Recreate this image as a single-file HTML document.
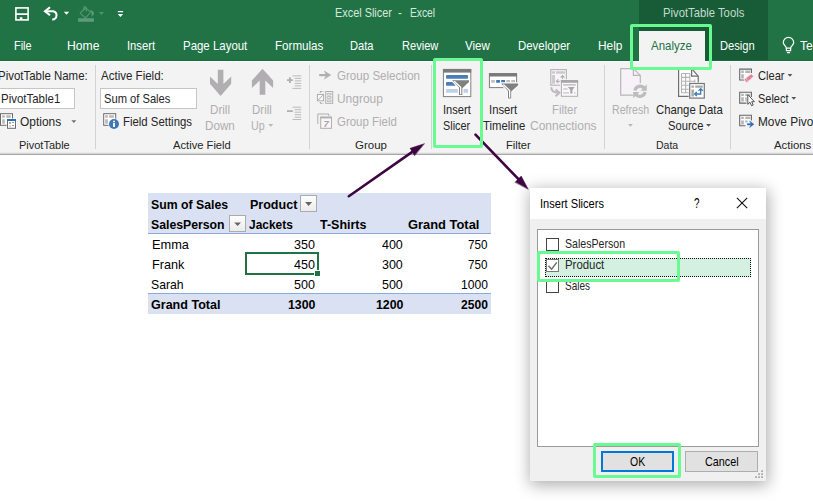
<!DOCTYPE html>
<html><head><meta charset="utf-8"><title>Excel Slicer</title>
<style>
*{box-sizing:border-box;margin:0;padding:0}
html,body{width:813px;height:501px;overflow:hidden;background:#fff}
body{font-family:"Liberation Sans",sans-serif;position:relative}
.a{position:absolute}
.t{position:absolute;white-space:pre;line-height:1;transform-origin:0 0;font-family:"Liberation Sans",sans-serif}
.sep{position:absolute;top:65px;width:1px;height:84px;background:#d4d2d4}
.hl{position:absolute;border:3px solid #69fa92;border-radius:2px}
svg{position:absolute;left:0;top:0;overflow:visible}
</style></head><body>
<!-- header -->
<div class="a" style="left:0;top:0;width:813px;height:61px;background:#217346"></div>
<div class="a" style="left:0;top:30px;width:52px;height:31px;background:#207345"></div>
<div class="a" style="left:639px;top:0;width:129px;height:61px;background:#185c37"></div>
<div class="a" style="left:639px;top:31px;width:66px;height:30px;background:#f3f3f3"></div>
<!-- ribbon -->
<div class="a" style="left:0;top:60px;width:639px;height:1px;background:#1a6a3c"></div>
<div class="a" style="left:705px;top:60px;width:108px;height:1px;background:#1a6a3c"></div>
<div class="a" style="left:0;top:61px;width:813px;height:93px;background:#f3f3f3"></div>
<div class="a" style="left:0;top:61px;width:639px;height:1px;background:#fcfcfc"></div>
<div class="a" style="left:705px;top:61px;width:108px;height:1px;background:#fcfcfc"></div>
<div class="a" style="left:0;top:152px;width:813px;height:1px;background:#ebebeb"></div>
<div class="a" style="left:0;top:153px;width:813px;height:1px;background:#d6d6d6"></div>
<div class="a" style="left:0;top:154px;width:813px;height:1px;background:#a6a6a6"></div>

<div class="sep" style="left:95px"></div>
<div class="sep" style="left:309px"></div>
<div class="sep" style="left:431px"></div>
<div class="sep" style="left:604px"></div>
<div class="sep" style="left:730px"></div>
<div class="a" style="left:-4px;top:88px;width:79px;height:21px;background:#fff;border:1px solid #c6c6c6"></div>
<div class="a" style="left:100px;top:88px;width:97px;height:21px;background:#fff;border:1px solid #c6c6c6"></div>

<!-- sheet -->
<div class="a" style="left:148px;top:193px;width:343px;height:41px;background:#d9e1f2"></div>
<div class="a" style="left:148px;top:233px;width:343px;height:1px;background:#8ea9db"></div>
<div class="a" style="left:148px;top:293px;width:343px;height:21px;background:#d9e1f2"></div>
<div class="a" style="left:148px;top:293px;width:343px;height:1px;background:#8ea9db"></div>
<div class="a" style="left:300px;top:195px;width:16.500px;height:16.500px;background:linear-gradient(#fefefe,#ebebeb);border:1px solid #ababab"></div>
<div class="a" style="left:229px;top:215px;width:16.500px;height:16.500px;background:linear-gradient(#fefefe,#ebebeb);border:1px solid #ababab"></div>
<div class="a" style="left:245px;top:252px;width:74px;height:23px;border:2px solid #217346"></div>
<div class="a" style="left:314px;top:270px;width:7px;height:7px;background:#217346;border:1px solid #fff"></div>

<!-- dialog -->
<div class="a" style="left:530px;top:188px;width:236px;height:292.500px;background:#f0f0f0;box-shadow:1px 3px 15px 1px rgba(0,0,0,.33)"></div>
<div class="a" style="left:530px;top:188px;width:236px;height:31px;background:#fff"></div>
<div class="a" style="left:537px;top:229px;width:222px;height:218px;background:#fff;border:1px solid #9a9a9a"></div>
<div class="a" style="left:545px;top:258px;width:206px;height:19px;background:#d3f0e0;border:1px dotted #111"></div>
<div class="a" style="left:546px;top:238px;width:13px;height:13px;background:#fff;border:1px solid #444"></div>
<div class="a" style="left:546px;top:259px;width:13px;height:13px;background:#fff;border:1px solid #777"></div>
<div class="a" style="left:546px;top:280px;width:13px;height:13px;background:#fff;border:1px solid #444"></div>
<div class="a" style="left:601px;top:451px;width:73px;height:21px;background:#e1e1e1;border:2px solid #0078d7"></div>
<div class="a" style="left:685px;top:451px;width:73px;height:21px;background:#e1e1e1;border:1px solid #adadad"></div>

<span class="t" style="left:334.6px;top:7.00px;font-size:12.6px;color:#d6e8dd;transform:scaleX(0.8648)">Excel Slicer</span>
<span class="t" style="left:398.4px;top:7.00px;font-size:12.6px;color:#d6e8dd;transform:scaleX(0.9279)">-</span>
<span class="t" style="left:409.9px;top:7.00px;font-size:12.6px;color:#d6e8dd;transform:scaleX(0.8150)">Excel</span>
<span class="t" style="left:663.4px;top:7.00px;font-size:12.6px;color:#c3dbcc;transform:scaleX(0.8956)">PivotTable Tools</span>
<span class="t" style="left:13.6px;top:40.00px;font-size:12.9px;color:#ffffff;transform:scaleX(0.8469)">File</span>
<span class="t" style="left:66.6px;top:40.00px;font-size:12.9px;color:#ffffff;transform:scaleX(0.9421)">Home</span>
<span class="t" style="left:126.7px;top:40.00px;font-size:12.9px;color:#ffffff;transform:scaleX(0.8713)">Insert</span>
<span class="t" style="left:182.5px;top:40.00px;font-size:12.9px;color:#ffffff;transform:scaleX(0.8882)">Page Layout</span>
<span class="t" style="left:274.5px;top:40.00px;font-size:12.9px;color:#ffffff;transform:scaleX(0.8989)">Formulas</span>
<span class="t" style="left:350.4px;top:40.00px;font-size:12.9px;color:#ffffff;transform:scaleX(0.8629)">Data</span>
<span class="t" style="left:402.0px;top:40.00px;font-size:12.9px;color:#ffffff;transform:scaleX(0.8585)">Review</span>
<span class="t" style="left:464.9px;top:40.00px;font-size:12.9px;color:#ffffff;transform:scaleX(0.8983)">View</span>
<span class="t" style="left:517.9px;top:40.00px;font-size:12.9px;color:#ffffff;transform:scaleX(0.8866)">Developer</span>
<span class="t" style="left:597.6px;top:40.00px;font-size:12.9px;color:#ffffff;transform:scaleX(0.9202)">Help</span>
<span class="t" style="left:651.3px;top:40.00px;font-size:12.9px;color:#217346;transform:scaleX(0.8894)">Analyze</span>
<span class="t" style="left:719.7px;top:40.00px;font-size:12.9px;color:#ffffff;transform:scaleX(0.8670)">Design</span>
<span class="t" style="left:800.4px;top:40.00px;font-size:12.9px;color:#ffffff;transform:scaleX(0.9464)">Tel</span>
<span class="t" style="left:-1.6px;top:70.00px;font-size:12.8px;color:#262626;transform:scaleX(0.8943)">PivotTable Name:</span>
<span class="t" style="left:1.0px;top:93.00px;font-size:12.8px;color:#262626;transform:scaleX(0.8962)">PivotTable1</span>
<span class="t" style="left:19.7px;top:116.00px;font-size:12.8px;color:#262626;transform:scaleX(0.9340)">Options</span>
<span class="t" style="left:18.6px;top:140.00px;font-size:11.2px;color:#262626;transform:scaleX(0.9821)">PivotTable</span>
<span class="t" style="left:100.5px;top:70.00px;font-size:12.8px;color:#262626;transform:scaleX(0.9010)">Active Field:</span>
<span class="t" style="left:103.7px;top:93.00px;font-size:12.8px;color:#262626;transform:scaleX(0.8724)">Sum of Sales</span>
<span class="t" style="left:122.8px;top:116.00px;font-size:12.8px;color:#262626;transform:scaleX(0.8900)">Field Settings</span>
<span class="t" style="left:173.0px;top:140.00px;font-size:11.2px;color:#262626;transform:scaleX(0.9995)">Active Field</span>
<span class="t" style="left:209.7px;top:104.00px;font-size:12.8px;color:#b0aeb0;transform:scaleX(0.9072)">Drill</span>
<span class="t" style="left:204.9px;top:120.00px;font-size:12.8px;color:#b0aeb0;transform:scaleX(0.9108)">Down</span>
<span class="t" style="left:251.8px;top:104.00px;font-size:12.8px;color:#b0aeb0;transform:scaleX(0.8981)">Drill</span>
<span class="t" style="left:250.9px;top:120.00px;font-size:12.8px;color:#b0aeb0;transform:scaleX(0.8374)">Up</span>
<span class="t" style="left:336.6px;top:70.00px;font-size:12.8px;color:#b0aeb0;transform:scaleX(0.9045)">Group Selection</span>
<span class="t" style="left:337.1px;top:93.00px;font-size:12.8px;color:#b0aeb0;transform:scaleX(0.9329)">Ungroup</span>
<span class="t" style="left:336.6px;top:116.00px;font-size:12.8px;color:#b0aeb0;transform:scaleX(0.8959)">Group Field</span>
<span class="t" style="left:354.8px;top:140.00px;font-size:11.2px;color:#262626;transform:scaleX(1.0259)">Group</span>
<span class="t" style="left:443.2px;top:104.00px;font-size:12.8px;color:#262626;transform:scaleX(0.8683)">Insert</span>
<span class="t" style="left:443.4px;top:120.00px;font-size:12.8px;color:#262626;transform:scaleX(0.8469)">Slicer</span>
<span class="t" style="left:488.7px;top:104.00px;font-size:12.8px;color:#262626;transform:scaleX(0.8808)">Insert</span>
<span class="t" style="left:482.5px;top:120.00px;font-size:12.8px;color:#262626;transform:scaleX(0.8854)">Timeline</span>
<span class="t" style="left:551.8px;top:104.00px;font-size:12.8px;color:#b0aeb0;transform:scaleX(0.8862)">Filter</span>
<span class="t" style="left:530.4px;top:120.00px;font-size:12.8px;color:#b0aeb0;transform:scaleX(0.9362)">Connections</span>
<span class="t" style="left:506.0px;top:140.00px;font-size:11.2px;color:#262626;transform:scaleX(0.9970)">Filter</span>
<span class="t" style="left:611.8px;top:104.00px;font-size:12.8px;color:#b0aeb0;transform:scaleX(0.8301)">Refresh</span>
<span class="t" style="left:655.6px;top:104.00px;font-size:12.8px;color:#262626;transform:scaleX(0.8857)">Change Data</span>
<span class="t" style="left:667.6px;top:120.00px;font-size:12.8px;color:#262626;transform:scaleX(0.8731)">Source</span>
<span class="t" style="left:656.2px;top:140.00px;font-size:11.2px;color:#262626;transform:scaleX(0.9391)">Data</span>
<span class="t" style="left:757.5px;top:70.00px;font-size:12.8px;color:#262626;transform:scaleX(0.8662)">Clear</span>
<span class="t" style="left:757.5px;top:93.00px;font-size:12.8px;color:#262626;transform:scaleX(0.8573)">Select</span>
<span class="t" style="left:757.7px;top:116.00px;font-size:12.8px;color:#262626;transform:scaleX(0.9255)">Move Pivo</span>
<span class="t" style="left:774.4px;top:140.00px;font-size:11.2px;color:#262626;transform:scaleX(1.0140)">Actions</span>
<span class="t" style="left:151.3px;top:199.00px;font-size:12.9px;color:#000000;transform:scaleX(0.9524);font-weight:bold">Sum of Sales</span>
<span class="t" style="left:249.6px;top:199.00px;font-size:12.9px;color:#000000;transform:scaleX(0.9712);font-weight:bold">Product</span>
<span class="t" style="left:151.3px;top:219.00px;font-size:12.9px;color:#000000;transform:scaleX(0.9510);font-weight:bold">SalesPerson</span>
<span class="t" style="left:249.2px;top:219.00px;font-size:12.9px;color:#000000;transform:scaleX(0.9258);font-weight:bold">Jackets</span>
<span class="t" style="left:320.2px;top:219.00px;font-size:12.9px;color:#000000;transform:scaleX(0.9667);font-weight:bold">T-Shirts</span>
<span class="t" style="left:408.4px;top:219.00px;font-size:12.9px;color:#000000;transform:scaleX(1.0001);font-weight:bold">Grand Total</span>
<span class="t" style="left:151.5px;top:239.00px;font-size:12.9px;color:#000000;transform:scaleX(0.9933)">Emma</span>
<span class="t" style="left:151.5px;top:259.00px;font-size:12.9px;color:#000000;transform:scaleX(0.9832)">Frank</span>
<span class="t" style="left:151.3px;top:279.00px;font-size:12.9px;color:#000000;transform:scaleX(0.9475)">Sarah</span>
<span class="t" style="left:151.3px;top:299.00px;font-size:12.9px;color:#000000;transform:scaleX(0.9735);font-weight:bold">Grand Total</span>
<span class="t" style="left:294.3px;top:239.00px;font-size:12.9px;color:#000000;transform:scaleX(0.9714)">350</span>
<span class="t" style="left:382.2px;top:239.00px;font-size:12.9px;color:#000000;transform:scaleX(0.9667)">400</span>
<span class="t" style="left:468.4px;top:239.00px;font-size:12.9px;color:#000000;transform:scaleX(0.9017)">750</span>
<span class="t" style="left:294.3px;top:259.00px;font-size:12.9px;color:#000000;transform:scaleX(0.9714)">450</span>
<span class="t" style="left:382.2px;top:259.00px;font-size:12.9px;color:#000000;transform:scaleX(0.9667)">300</span>
<span class="t" style="left:468.4px;top:259.00px;font-size:12.9px;color:#000000;transform:scaleX(0.9017)">750</span>
<span class="t" style="left:294.3px;top:279.00px;font-size:12.9px;color:#000000;transform:scaleX(0.9714)">500</span>
<span class="t" style="left:382.2px;top:279.00px;font-size:12.9px;color:#000000;transform:scaleX(0.9667)">500</span>
<span class="t" style="left:460.9px;top:279.00px;font-size:12.9px;color:#000000;transform:scaleX(0.9377)">1000</span>
<span class="t" style="left:287.7px;top:299.00px;font-size:12.9px;color:#000000;transform:scaleX(0.9586);font-weight:bold">1300</span>
<span class="t" style="left:375.5px;top:299.00px;font-size:12.9px;color:#000000;transform:scaleX(0.9586);font-weight:bold">1200</span>
<span class="t" style="left:460.9px;top:299.00px;font-size:12.9px;color:#000000;transform:scaleX(0.9377);font-weight:bold">2500</span>
<span class="t" style="left:539.8px;top:198.00px;font-size:12.4px;color:#000000;transform:scaleX(0.8937)">Insert Slicers</span>
<span class="t" style="left:694.4px;top:196.00px;font-size:14.2px;color:#000000;transform:scaleX(0.6970)">?</span>
<span class="t" style="left:565.4px;top:238.00px;font-size:12.2px;color:#262626;transform:scaleX(0.8696)">SalesPerson</span>
<span class="t" style="left:565.4px;top:259.00px;font-size:12.2px;color:#262626;transform:scaleX(0.9354)">Product</span>
<span class="t" style="left:565.4px;top:280.00px;font-size:12.2px;color:#262626;transform:scaleX(0.8197)">Sales</span>
<span class="t" style="left:630.3px;top:456.00px;font-size:12.2px;color:#000000;transform:scaleX(0.8575)">OK</span>
<span class="t" style="left:704.5px;top:456.00px;font-size:12.2px;color:#000000;transform:scaleX(0.8857)">Cancel</span>

<svg width="813" height="501" viewBox="0 0 813 501">
<!-- QAT -->
<g fill="none" stroke="#fff" stroke-width="1.6">
<rect x="15.9" y="7.9" width="12.2" height="12"/>
<path d="M50 7.300 L45 11.300 L50 15.300" stroke-width="2.100"/>
<path d="M45.600 11.300 H53.200 A4.200 4.100 0 0 1 52.200 19.400" stroke-width="2"/>
</g>
<path fill="#fff" d="M16 13.300h12v1.800h-12z M19.800 17.300h2.600v2.800h-2.600z M63.8 11.8h5.4l-2.7 3z M117.800 10.900h5.300v1.400h-5.300z M117.800 14h5.300l-2.650 3.100z"/>
<g fill="none" stroke="#569775" stroke-width="1.100">
<path d="M85.300 7.800L90.600 12.100L85.600 17.900L80.200 13.300Z"/>
<path d="M83.800 10.200V7.600Q83.800 6.700 84.900 6.700Q86.200 6.700 86.200 7.800V11.500"/>
</g>
<path fill="#5d9c7a" d="M78.100 18.300h15.800v3.500h-15.800z M90.200 10.300C92.600 10.300 94.200 11.800 93.900 14.200L91.400 16.900C92 14.500 91.800 12.500 90.200 10.300z"/>
<path fill="#4f9170" d="M98.900 12h5.100l-2.550 2.900z"/>
<!-- lightbulb -->
<g fill="none" stroke="#fff" stroke-width="1.250">
<path d="M786.400 48 C786 45.800 783.300 45 783.300 42.500 A5.200 5.200 0 0 1 793.700 42.500 C793.700 45 791 45.800 790.600 48 Z"/>
<path d="M786.400 48V50.500H790.600V48 M786.900 52.600H790.100"/>
</g>

<!-- Options icon -->
<g>
<rect x="0.5" y="113.700" width="12" height="11.600" fill="#fff" stroke="#6a6a6a"/>
<path fill="#b8b8b8" d="M2.200 115.200h2.600v2.600h-2.600z M6.200 115.200h4.600v2.600h-4.600z M2.200 119.200h2.600v4.600h-2.600z"/>
<rect x="6.500" y="118.500" width="10" height="10.800" fill="#fff"/>
<rect x="7.500" y="120" width="8" height="8.300" fill="#fff" stroke="#6a6a6a"/>
<rect x="7" y="119" width="9" height="2" fill="#2e6eb5"/>
<path fill="#777" d="M9.200 122.200h1.600v1.600h-1.600z M12 122.200h2v.7h-2z M12 125.100h2v.7h-2z"/>
<path fill="#c0c0c0" d="M9.200 125.200h1.600v1.600h-1.600z"/>
</g>
<path fill="#6f6f6f" d="M71.4 120.2h4.9l-2.45 2.7z"/>
<!-- Field settings icon -->
<g>
<rect x="103.700" y="113.700" width="12" height="11.600" fill="#fff" stroke="#6a6a6a"/>
<path fill="#b8b8b8" d="M105.200 115.200h2.600v2.500h-2.600z M109.100 115.200h4.700v2.500h-4.700z M105.200 119.300h2.600v4.500h-2.600z"/>
<circle cx="114" cy="124" r="5.700" fill="#f3f3f3"/>
<circle cx="114" cy="124" r="5" fill="#3d78b4"/>
<path fill="#fff" d="M113.100 120.700h1.800v1.500h-1.800z M113.100 123h1.800v4.100h-1.800z"/>
</g>
<!-- Drill arrows -->
<path fill="#b0aeb0" d="M217.8 69.8h5.6v14.2l7.8-7.6v7.4l-10.6 12.2l-10.6-12.2v-7.4l7.8 7.600z"/>
<path fill="#b0aeb0" d="M259.7 94.8h5.6v-14.4l7.8 7.6v-7.4l-10.6-11.8l-10.600 11.8v7.400l7.800-7.600z"/>
<path fill="#6f6f6f" opacity=".45" d="M268.300 124h4.900l-2.450 2.700z"/>
<!-- expand / collapse -->
<g stroke="#bcbabc" stroke-width="1" fill="none">
<path d="M292.500 75.900H301.200 M294.700 78.400H301.200 M294.700 80.900H301.200 M294.700 83.400H301.200 M294.700 85.900H301.200 M292.500 88.400H301.200"/>
<path d="M292.500 107.200H301.200 M294.700 109.700H301.200 M294.700 112.200H301.200 M294.700 114.700H301.200 M294.700 117.200H301.200 M292.500 119.500H301.200"/>
</g>
<path fill="#b0aeb0" d="M287 79.200h5.800v1.800h-5.800z M289 77.200h1.800v5.800h-1.800z M287 110.300h5.800v1.800h-5.800z"/>
<!-- Group icons -->
<path fill="none" stroke="#b0aeb0" stroke-width="2.200" d="M319.200 75.100H328"/>
<path fill="#b0aeb0" d="M324.300 71.100L330.700 75.100L324.300 79.100L326.600 75.100Z" stroke="#b0aeb0" stroke-width=".6"/>
<g fill="none" stroke="#b0aeb0">
<rect x="325.700" y="91.500" width="7" height="11.800" fill="#f8f6f8"/>
<path d="M327.300 93.300H331.100V95H327.300Z M327.300 96.600H331.100V98.300H327.300Z M327.300 99.900H331.100V101.600H327.300Z" stroke-width=".8" stroke="#b0aeb0"/>
<rect x="317.400" y="94.400" width="6.200" height="6.400" fill="#f8f6f8"/>
<path d="M318.200 100L322.800 95.200"/>
<path d="M320 91.500H324 M320 103.300H324" stroke-dasharray="2.500 1"/>
<path d="M320.300 91.500V93 M320.300 102V103.300"/>
</g>
<g fill="none" stroke="#b0aeb0">
<path d="M317.800 124V114H328.800V116"/>
<rect x="320.700" y="117.300" width="10.800" height="11" fill="#f8f6f8"/>
<path d="M320.200 117.500H332" stroke-width="1.800"/>
</g>
<text x="323.600" y="127.300" font-family="Liberation Sans, sans-serif" font-size="9.500" font-weight="bold" font-style="italic" fill="#a8a6a8">7</text>
<!-- Insert Slicer icon -->
<g>
<rect x="443.400" y="69.400" width="27.400" height="27.200" fill="#fff" stroke="#7f7f7f"/>
<rect x="443" y="69" width="28.200" height="3.600" fill="#7a7a7a"/>
<rect x="446" y="75.100" width="22.100" height="3.700" rx="1" fill="#4a7ebb"/>
<rect x="446" y="81.900" width="10" height="3.800" rx="1" fill="#4a7ebb"/>
<rect x="446" y="89.100" width="22.100" height="3.700" rx=".6" fill="#bdd0e9"/>
<path d="M452.200 80.200H469V82L462.300 88.200V94.900H459V87.600Z" fill="#fff" stroke="#fff" stroke-width="2.400" stroke-linejoin="round"/>
<path d="M452.200 80.200H469V82L462.300 88.200V94.900H459V87.600Z" fill="#808080"/>
<path d="M454.200 81.300L460.650 87.200V94.200" fill="none" stroke="#fff" stroke-width="1.300"/>
</g>
<!-- Insert Timeline icon -->
<g>
<rect x="489.400" y="73.600" width="27.200" height="14" fill="#fff" stroke="#7f7f7f"/>
<rect x="489" y="73.100" width="28" height="3.400" fill="#7a7a7a"/>
<path fill="#bfbfbf" d="M491.200 80h3.600v2.700h-3.600z M506.300 80h3.700v2.700h-3.700z M511.300 80h3.700v2.700h-3.700z"/>
<path fill="#3f76b9" d="M496.200 80h3.700v2.700h-3.700z M501.200 80h3.800v2.700h-3.800z"/>
<path d="M501.200 83.400H518.200V85.200L511.200 91.600V98.600H508V91Z" fill="#fbfbfb" stroke="#fbfbfb" stroke-width="2.400" stroke-linejoin="round"/>
<path d="M501.200 83.400H518.200V85.200L511.200 91.600V98.600H508V91Z" fill="#808080"/>
<path d="M503.300 84.500L509.650 90.500V97.800" fill="none" stroke="#fff" stroke-width="1.300"/>
</g>
<!-- Filter connections icon -->
<g fill="none">
<rect x="550.8" y="69.600" width="15.600" height="15.600" fill="#f7f5f7" stroke="#b8b6b8" stroke-width="1.200"/>
<path fill="#cbc9cb" d="M552.100 71.200h2.900v2.500h-2.900z M556 71.200h9v2.500h-9z M552.100 75.100h2.900v8.700h-2.900z"/>
<path d="M562.500 79.500V75.600 M560.600 77.500L562.500 75.500L564.400 77.500 M561 81.200H556.600 M558.300 79.400L556.400 81.200L558.300 83" stroke="#b0aeb0" stroke-width="1.100"/>
<rect x="560" y="79.200" width="19" height="18.400" fill="#f3f3f3"/>
<rect x="561.400" y="80.600" width="16.200" height="15.700" fill="#f9f7f9" stroke="#b0aeb0"/>
<rect x="560.900" y="80" width="17.200" height="2.800" fill="#a8a6a8"/>
<path fill="#b5b3b5" d="M563.200 84.300h12.600v1.300h-12.600z M563.200 88.400h4.300v1.200h-4.300z"/>
<path fill="#d5d3d5" d="M563.200 92.100h5.800v1.700h-5.800z M574.100 92.100h1.500v1.700h-1.500z"/>
<path d="M567.900 87.100H574.700L572.400 90.100V93.600H570.300V90.100Z" fill="#a8a6a8"/>
<path d="M551.300 87.300C551.300 91.400 553.500 92.800 558.500 92.800 M555.600 89.400L559.400 92.800L555.600 96.200" stroke-width="2" stroke="#bcbabc"/>
</g>
<!-- Refresh icon -->
<g fill="none">
<path d="M620.700 68.600H633.400L640.300 75.400V95.100H620.700Z" fill="#f6f2f7" stroke="#b8b6b8" stroke-width="1.200"/>
<path d="M633.400 68.600V75.400H640.300" stroke="#b8b6b8" stroke-width="1.200"/>
<circle cx="640" cy="91.300" r="8.300" fill="#f3f3f3"/>
<path d="M634.950 90.600A5.100 5.100 0 0 1 644.300 88.600 M645.050 92A5.100 5.100 0 0 1 635.700 94" stroke="#bebcbe" stroke-width="3.200"/>
<path d="M646.800 84.300V90.700H640.600Z M633.200 98.300V91.900H639.400Z" fill="#bebcbe"/>
</g>
<path fill="#6f6f6f" opacity=".45" d="M628 124h4.900l-2.450 2.700z"/>
<!-- Change data source icon -->
<g fill="none">
<path d="M678.600 68.500H691.600L698.200 76.100V96.300H678.600Z" fill="#fdfdfd" stroke="#6f6f6f" stroke-width="1.200"/>
<path d="M691.600 69V76.100H698.200" stroke="#6f6f6f" stroke-width="1.200"/>
<path d="M681.500 73.500H689.800 M681.500 77.400H689.800 M681.500 81.300H694.800 M681.500 85.300H689.800 M681.500 89.200H689.800 M681.500 92.800H689.800 M681.500 73.500V92.800 M685.600 73.500V92.800 M689.800 73.500V92.800 M694.800 79.500V83" stroke="#b4b4b4" stroke-width="1.100"/>
<rect x="688.600" y="82.400" width="16.800" height="16.800" fill="#f6f6f6"/>
<rect x="689.700" y="83.500" width="14.600" height="14.600" fill="#fdfdfd" stroke="#767676" stroke-width="1.200"/>
<path d="M691.400 85.400h2.500v2.300h-2.500z M695.200 85.400h7.500v2.300h-7.500z M691.400 89.400h2.500v7.200h-2.500z" fill="#a8a8a8"/>
<path d="M695 94H700.700V88.800 M698.600 90.800L700.700 88.600L702.800 90.800 M696.800 92L694.700 94L696.800 96" stroke="#3b7bbf" stroke-width="1.300"/>
</g>
<path fill="#555" d="M706 124h5l-2.500 2.700z"/>
<!-- Clear icon -->
<g fill="none">
<path d="M751.400 73V69.100H739.700V80H744.500" stroke="#666" stroke-width="1.100" fill="#fbfbfb"/>
<path d="M741.200 70.600h2.600v2.400h-2.600z M745.300 70.600h4.900v2.400h-4.900z M741.200 74.300h2.600v4.200h-2.600z" fill="#b4b4b4"/>
<path d="M751.300 73.700L753.700 76.400L746.800 82.700L744 79.600Z" fill="#e57f98" stroke="#f3f3f3" stroke-width=".8"/>
<path d="M745.700 78.200L748.300 81.100" stroke="#f6c9d3" stroke-width=".9"/>
</g>
<path fill="#555" d="M787.600 74h4.800l-2.400 2.700z"/>
<!-- Select icon -->
<g fill="none">
<path d="M751.400 97V92.200H739.700V103.100H746.500" stroke="#666" stroke-width="1.100" fill="#fbfbfb"/>
<path d="M741.200 93.700h2.600v2.300h-2.600z M745.300 93.700h2.300v2.300h-2.300z M748.400 93.700h1.800v2.300h-1.800z M741.200 97.200h2.600v4.400h-2.600z M745.300 97.200h1.500v4.400h-1.500z" fill="#b4b4b4"/>
<path d="M747.800 94.600V104.300L750 102.300L751.600 105.700L753.200 105L751.700 101.700H754.400Z" fill="#fff" stroke="#444" stroke-width=".9" stroke-linejoin="round"/>
</g>
<path fill="#555" d="M791.400 97h4.800l-2.400 2.700z"/>
<!-- Move icon -->
<g fill="none">
<path d="M751.400 120.500V115.300H739.700V125.800H745.500" stroke="#666" stroke-width="1.100" fill="#fbfbfb"/>
<path d="M741.200 116.800h2.600v2.300h-2.600z M745.300 116.800h4.900v2.300h-4.900z M741.200 120.400h2.600v4.200h-2.600z M745.300 120.400h2.300v2h-2.300z" fill="#b4b4b4"/>
<path d="M747.100 124.300H752" stroke="#2e6db3" stroke-width="1.800"/>
<path d="M749.600 121L753.900 124.300L749.600 127.600L751.300 124.300Z" fill="#2e6db3" stroke="#2e6db3" stroke-width=".5"/>
</g>
<!-- pivot dropdown glyphs -->
<path fill="#666" d="M305.1 202.1h7l-3.5 3.8z M234.2 222.4h6.800l-3.400 3.700z"/>
<!-- dialog glyphs -->
<path d="M736.900 197.800L747.200 208.100 M747.200 197.800L736.900 208.100" stroke="#111" stroke-width="1.100"/>
<path d="M548.400 265.800L551.600 269.200L556.800 262.400" fill="none" stroke="#6e6e6e" stroke-width="1.500"/>
<path fill="#a8a8a8" d="M761.2 470.2h1.8v1.8h-1.8z M758.1 473.2h1.8v1.8h-1.8z M761.2 473.2h1.8v1.8h-1.8z M755.1 476.3h1.8v1.8h-1.8z M758.1 476.3h1.8v1.8h-1.8z M761.2 476.3h1.8v1.8h-1.8z"/>
<!-- arrows -->
<g stroke="#3d0641" stroke-width="2.6" fill="#3d0641" stroke-linecap="round">
<path d="M348.8 196.2L413 151.4"/>
<path d="M424.2 143.7L410.1 148.3L414.4 155.5Z" stroke-width=".5" stroke-linejoin="round"/>
<path d="M475.5 134.6L519 179.7"/>
<path d="M528.1 189L521.2 176.1L515.2 182.1Z" stroke-width=".5" stroke-linejoin="round"/>
</g>

</svg>

<div class="hl" style="left:630px;top:24px;width:82px;height:46px"></div>
<div class="hl" style="left:433px;top:58px;width:50px;height:90px"></div>
<div class="hl" style="left:537px;top:251px;width:143px;height:31px"></div>
<div class="hl" style="left:593px;top:443px;width:88px;height:35px"></div>
</body></html>
